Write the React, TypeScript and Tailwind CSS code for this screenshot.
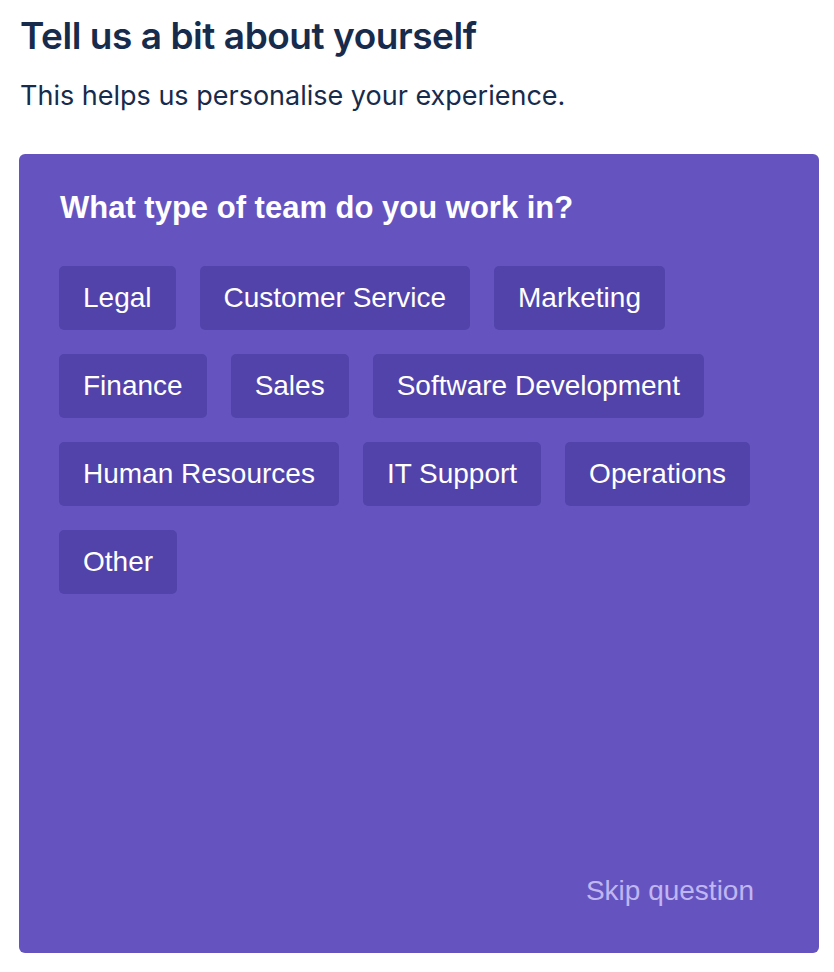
import React from "react";

const rows = [
  ["Legal", "Customer Service", "Marketing"],
  ["Finance", "Sales", "Software Development"],
  ["Human Resources", "IT Support", "Operations"],
  ["Other"],
];

export default function App() {
  return (
    <div className="w-[834px] h-[972px] bg-white pt-[14px] pl-[19px]" >
      <h1 className="pl-[1px] text-[37px] leading-[44px] font-semibold text-[#172B4D] tracking-[-0.45px]" style={{ fontFamily: "Inter, 'Liberation Sans', sans-serif" }}>
        Tell us a bit about yourself
      </h1>
      <p className="pl-[1px] mt-[20px] text-[27px] leading-[36px] text-[#172B4D]" style={{ fontFamily: "Inter, 'Liberation Sans', sans-serif" }}>
        This helps us personalise your experience.
      </p>
      <div className="mt-[40px] w-[800px] h-[799px] bg-[#6554C0] rounded-[6px] flex flex-col pl-[40px] pr-[65px] pt-[36px] pb-[46px]" style={{ fontFamily: "'Liberation Sans', Arial, sans-serif" }}>
        <h2 className="pl-[1px] text-[31px] leading-[36px] font-bold text-white">What type of team do you work in?</h2>
        <div className="mt-[40px] flex flex-col gap-[24px]">
          {rows.map((r, i) => (
            <div key={i} className="flex gap-[24px]">
              {r.map((t) => (
                <button key={t} className="h-[64px] px-[24px] rounded-[5px] bg-[#5243AA] text-white text-[28px]">
                  {t}
                </button>
              ))}
            </div>
          ))}
        </div>
        <div className="mt-auto flex justify-end">
          <span className="text-[28px] leading-[32px] text-[#C0B6F2]">Skip question</span>
        </div>
      </div>
    </div>
  );
}
